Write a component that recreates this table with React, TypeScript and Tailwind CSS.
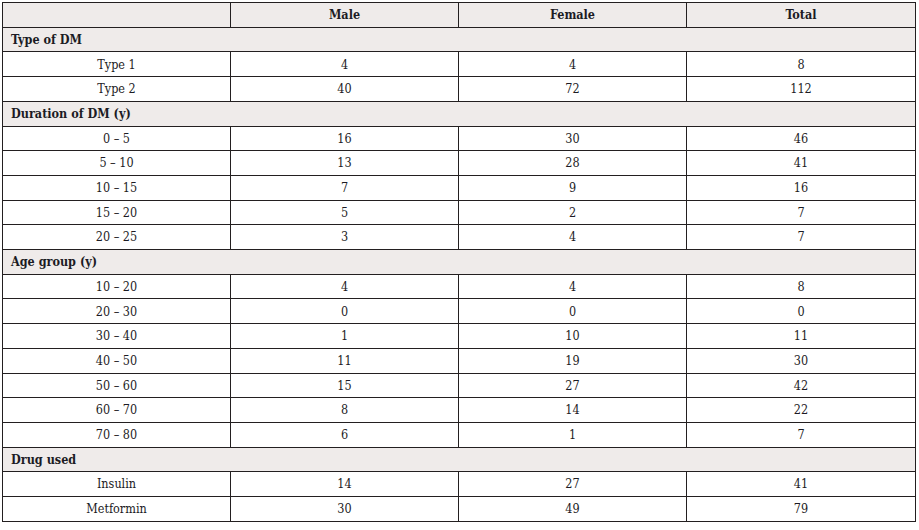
import React from "react";

type Row =
  | { kind: "section"; label: string }
  | { kind: "data"; cells: [string, string, string, string] };

const rows: Row[] = [
  { kind: "section", label: "Type of DM" },
  { kind: "data", cells: ["Type 1", "4", "4", "8"] },
  { kind: "data", cells: ["Type 2", "40", "72", "112"] },
  { kind: "section", label: "Duration of DM (y)" },
  { kind: "data", cells: ["0 – 5", "16", "30", "46"] },
  { kind: "data", cells: ["5 – 10", "13", "28", "41"] },
  { kind: "data", cells: ["10 – 15", "7", "9", "16"] },
  { kind: "data", cells: ["15 – 20", "5", "2", "7"] },
  { kind: "data", cells: ["20 – 25", "3", "4", "7"] },
  { kind: "section", label: "Age group (y)" },
  { kind: "data", cells: ["10 – 20", "4", "4", "8"] },
  { kind: "data", cells: ["20 – 30", "0", "0", "0"] },
  { kind: "data", cells: ["30 – 40", "1", "10", "11"] },
  { kind: "data", cells: ["40 – 50", "11", "19", "30"] },
  { kind: "data", cells: ["50 – 60", "15", "27", "42"] },
  { kind: "data", cells: ["60 – 70", "8", "14", "22"] },
  { kind: "data", cells: ["70 – 80", "6", "1", "7"] },
  { kind: "section", label: "Drug used" },
  { kind: "data", cells: ["Insulin", "14", "27", "41"] },
  { kind: "data", cells: ["Metformin", "30", "49", "79"] },
];

const cell =
  "flex items-center justify-center border-r border-b border-[#231f20] h-[24.71px] pt-[1px]";

export default function App() {
  return (
    <div
      className="w-[919px] h-[530px] bg-white pt-[2px] pl-[2px] text-[#1c1b24] text-[12.5px] leading-none font-stretch-condensed"
      style={{ fontFamily: '"DejaVu Serif", "Liberation Serif", serif' }}
    >
      <div className="w-[914px] border-l border-t border-[#231f20]">
        <div className="grid grid-cols-[228px_228px_228px_229px] bg-[#efebea] font-bold">
          <div className={cell}></div>
          <div className={cell}>Male</div>
          <div className={cell}>Female</div>
          <div className={cell}>Total</div>
        </div>
        {rows.map((r, i) =>
          r.kind === "section" ? (
            <div
              key={i}
              className="flex items-center h-[24.71px] border-r border-b border-[#231f20] bg-[#efebea] font-bold pl-[8px] pt-[1px]"
            >
              {r.label}
            </div>
          ) : (
            <div key={i} className="grid grid-cols-[228px_228px_228px_229px]">
              {r.cells.map((c, j) => (
                <div key={j} className={cell}>
                  {c}
                </div>
              ))}
            </div>
          )
        )}
      </div>
    </div>
  );
}
